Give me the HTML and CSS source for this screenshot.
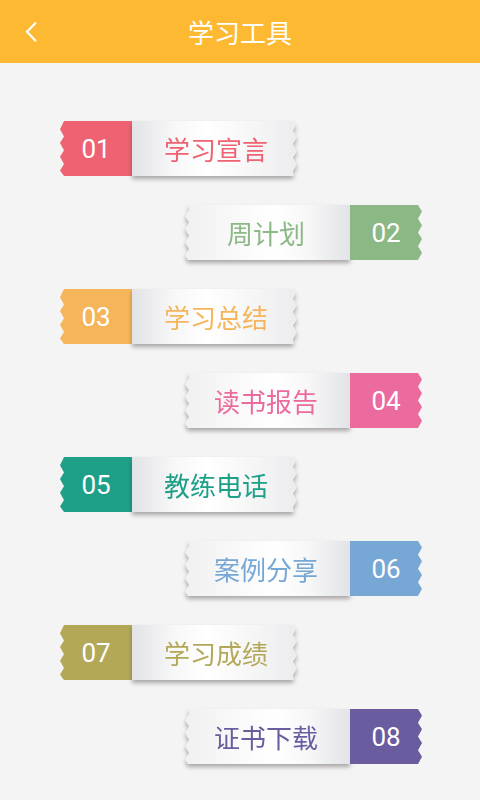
FILE: index.html
```html
<!DOCTYPE html>
<html lang="zh">
<head>
<meta charset="utf-8">
<title>学习工具</title>
<link rel="stylesheet" href="styles.css">
</head>
<body>
<header class="topbar">
  <svg class="back" width="14" height="22" viewBox="0 0 14 22"><path d="M11 1.5 L2 10.8 L11 20.2" fill="none" stroke="#fff" stroke-width="2.2"/></svg>
  <h1 class="title">学习工具</h1>
</header>
<main class="list">
  <div class="row left c1"><div class="badge">01</div><div class="tape"><div class="label">学习宣言</div></div></div>
  <div class="row right c2"><div class="tape"><div class="label">周计划</div></div><div class="badge">02</div></div>
  <div class="row left c3"><div class="badge">03</div><div class="tape"><div class="label">学习总结</div></div></div>
  <div class="row right c4"><div class="tape"><div class="label">读书报告</div></div><div class="badge">04</div></div>
  <div class="row left c5"><div class="badge">05</div><div class="tape"><div class="label">教练电话</div></div></div>
  <div class="row right c6"><div class="tape"><div class="label">案例分享</div></div><div class="badge">06</div></div>
  <div class="row left c7"><div class="badge">07</div><div class="tape"><div class="label">学习成绩</div></div></div>
  <div class="row right c8"><div class="tape"><div class="label">证书下载</div></div><div class="badge">08</div></div>
</main>
</body>
</html>
```
FILE: styles.css
```css
html, body {
  margin: 0;
  padding: 0;
}
body {
  width: 480px;
  height: 800px;
  background: #f4f4f4;
  font-family: "Noto Sans CJK SC", "Noto Sans", sans-serif;
  overflow: hidden;
}
.topbar {
  height: 63px;
  background: #feb932;
  display: flex;
  align-items: center;
  justify-content: center;
  position: relative;
}
.back {
  position: absolute;
  left: 25px;
  top: 21px;
}
.title {
  margin: 0;
  color: #fff;
  font-size: 26px;
  font-weight: 400;
  line-height: 1;
}
.list {
  display: flex;
  flex-direction: column;
  gap: 29px;
  padding-top: 58px;
}
.row {
  display: flex;
  height: 55px;
}
.row.left { margin-left: 60px; }
.row.right { margin-left: 184px; }
.badge {
  width: 72px;
  height: 55px;
  display: flex;
  align-items: center;
  justify-content: center;
  color: #fff;
  font-family: Roboto, "Noto Sans", sans-serif;
  font-size: 26px;
  background: var(--c);
}
.left .badge {
  clip-path: polygon(4px 0, 100% 0, 100% 100%, 4px 100%, 0 90%, 4px 78%, 0 65%, 4px 53%, 0 40%, 4px 28%, 0 15%);
}
.right .badge {
  clip-path: polygon(0 0, calc(100% - 4px) 0, 100% 12%, calc(100% - 4px) 25%, 100% 37%, calc(100% - 4px) 50%, 100% 62%, calc(100% - 4px) 75%, 100% 87%, calc(100% - 4px) 100%, 0 100%);
}
.tape {
  width: 166px;
  height: 55px;
  filter: drop-shadow(0 3px 2px rgba(60, 50, 55, 0.4));
}
.label {
  width: 100%;
  height: 100%;
  display: flex;
  align-items: center;
  justify-content: center;
  color: var(--c);
  font-size: 26px;
  line-height: 1;
}
.left .label {
  padding-left: 2px;
  box-sizing: border-box;
  background: linear-gradient(to right, #e2e3e6 0%, #f7f7f8 25%, #ffffff 45%, #f5f5f6 75%, #ebecee 100%);
  clip-path: polygon(0 0, calc(100% - 6px) 0, calc(100% - 2px) 7%, calc(100% - 5px) 18%, calc(100% - 1px) 30%, calc(100% - 5px) 42%, calc(100% - 1px) 55%, calc(100% - 5px) 67%, calc(100% - 1px) 79%, calc(100% - 5px) 91%, calc(100% - 4px) 100%, 0 100%);
}
.right .label {
  padding-right: 2px;
  box-sizing: border-box;
  background: linear-gradient(to left, #e2e3e6 0%, #f7f7f8 25%, #ffffff 45%, #f7f7f8 75%, #f0f0f1 100%);
  clip-path: polygon(4px 0, 100% 0, 100% 100%, 4px 100%, 1px 92%, 5px 80%, 1px 68%, 5px 56%, 1px 44%, 5px 32%, 1px 20%, 5px 9%);
}
.c1 { --c: #ee6272; }
.c2 { --c: #8cb886; }
.c3 { --c: #f6b55a; }
.c4 { --c: #ec6b9f; }
.c5 { --c: #1e9f87; }
.c6 { --c: #77a8d5; }
.c7 { --c: #b2a857; }
.c8 { --c: #6a5c9f; }
```
